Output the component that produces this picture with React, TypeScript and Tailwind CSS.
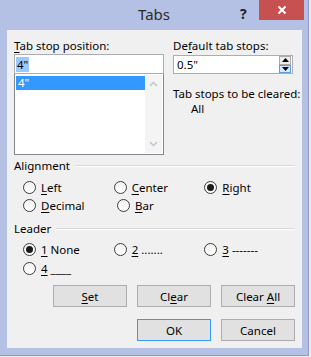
import React from 'react';

const U = ({ children }: { children: React.ReactNode }) => <span className="underline underline-offset-2">{children}</span>;

function Radio({ checked, children }: { checked?: boolean; children: React.ReactNode }) {
  return (
    <div className="w-[94px] flex items-center gap-[5px]">
      <span className="w-[13px] h-[13px] rounded-full border border-[#3c3c3c] bg-gradient-to-b from-[#f2f2f2] to-white flex items-center justify-center">
        {checked && <span className="w-[7px] h-[7px] rounded-full bg-[#1a1a1a]" />}
      </span>
      <span className="leading-[15px] whitespace-nowrap">{children}</span>
    </div>
  );
}

function GroupLabel({ children }: { children: React.ReactNode }) {
  return (
    <div className="flex items-center gap-[5px] h-[15px]">
      <span className="leading-[15px]">{children}</span>
      <span className="flex-1 h-px bg-[#d8d8d8] border-b border-white box-content" />
    </div>
  );
}

function Btn({ children, focused }: { children: React.ReactNode; focused?: boolean }) {
  return (
    <button
      type="button"
      className={`w-[74px] h-[22px] bg-[#e1e1e1] border leading-[15px] text-black ${focused ? 'border-[#3399ff]' : 'border-[#adadad]'}`}
    >
      {children}
    </button>
  );
}

export default function App() {
  return (
    <div className="w-[311px] h-[357px] bg-[#ececec] font-['Noto_Sans',sans-serif] text-[11.5px] text-black">
      <div className="w-[309px] h-[356px] bg-[#b4c0e4] border-r border-b border-[#8e99c6] relative">
        <div className="h-[30px] flex items-center justify-center text-[15px] text-[#2b2b2b] pb-[1px]">Tabs</div>
        <div className="absolute left-[240px] top-[3px] text-[14px] font-bold text-[#222]">?</div>
        <div className="absolute left-[259px] top-0 w-[45px] h-[20px] bg-[#c75050] flex items-center justify-center">
          <svg width="10" height="10" viewBox="0 0 10 10">
            <path d="M1.5 1.5 L8.5 8.5 M8.5 1.5 L1.5 8.5" stroke="white" strokeWidth="2" />
          </svg>
        </div>

        <div className="ml-[7px] w-[295px] h-[318px] bg-[#f0f0f0] px-[7px] pt-[8px]">
          <div className="flex gap-[9px]">
            <div className="w-[152px] flex flex-col">
              <div className="h-[15px] leading-[15px]"><U>T</U>ab stop position:</div>
              <div className="mt-[1px] h-[20px] bg-white border border-[#abadb3] flex items-center pl-[1px]">
                <span className="bg-[#99c9ff] px-[1px] leading-[15px]">4"</span>
              </div>
              <div className="h-[81px] bg-white border border-[#828790] border-t-0 flex p-[1px]">
                <div className="flex-1">
                  <div className="h-[14px] mt-[1px] bg-[#3399ff] text-white leading-[14px] pl-[2px]">4"</div>
                </div>
                <div className="w-[17px] bg-[#f4f4f4] flex flex-col justify-between items-center py-[6px]">
                  <svg width="9" height="6" viewBox="0 0 9 6"><path d="M1 5 L4.5 1.5 L8 5" stroke="#c4c4c4" strokeWidth="1.5" fill="none" /></svg>
                  <svg width="9" height="6" viewBox="0 0 9 6"><path d="M1 1 L4.5 4.5 L8 1" stroke="#c4c4c4" strokeWidth="1.5" fill="none" /></svg>
                </div>
              </div>
            </div>

            <div className="w-[122px] flex flex-col">
              <div className="h-[15px] leading-[15px] whitespace-nowrap">De<U>f</U>ault tab stops:</div>
              <div className="mt-[2px] w-[120px] h-[19px] bg-white border border-[#abadb3] flex items-center">
                <span className="flex-1 pl-[3px] leading-[15px]">0.5"</span>
                <div className="w-[12px] h-full flex flex-col mr-[1px]">
                  <div className="flex-1 border border-[#acacac] bg-[#ececec] flex items-center justify-center">
                    <svg width="7" height="4" viewBox="0 0 7 4"><path d="M0 4 L3.5 0 L7 4 Z" fill="#000" /></svg>
                  </div>
                  <div className="flex-1 border border-[#5b9be0] bg-[#d6e8f9] flex items-center justify-center">
                    <svg width="7" height="4" viewBox="0 0 7 4"><path d="M0 0 L3.5 4 L7 0 Z" fill="#000" /></svg>
                  </div>
                </div>
              </div>
              <div className="mt-[12px] h-[15px] leading-[15px] whitespace-nowrap">Tab stops to be cleared:</div>
              <div className="h-[15px] leading-[15px] pl-[18px]">All</div>
            </div>
          </div>

          <div className="mt-[3px]">
            <GroupLabel>Alignment</GroupLabel>
          </div>
          <div className="mt-[5px] pl-[9px]">
            <div className="flex h-[18px] items-center">
              <Radio><U>L</U>eft</Radio>
              <Radio><U>C</U>enter</Radio>
              <Radio checked><U>R</U>ight</Radio>
            </div>
            <div className="flex h-[18px] items-center">
              <Radio><U>D</U>ecimal</Radio>
              <Radio><U>B</U>ar</Radio>
            </div>
          </div>

          <div className="mt-[7px]">
            <GroupLabel>Leader</GroupLabel>
          </div>
          <div className="mt-[4px] pl-[9px]">
            <div className="flex h-[19px] items-center">
              <Radio checked><U>1</U> None</Radio>
              <Radio><U>2</U> .......</Radio>
              <Radio><U>3</U> -------</Radio>
            </div>
            <div className="flex h-[18px] items-center">
              <Radio><U>4</U> ____</Radio>
            </div>
          </div>

          <div className="mt-[8px] flex justify-end gap-[10px]">
            <Btn><U>S</U>et</Btn>
            <Btn>Cl<U>e</U>ar</Btn>
            <Btn>Clear <U>A</U>ll</Btn>
          </div>
          <div className="mt-[12px] flex justify-end gap-[10px]">
            <Btn focused>OK</Btn>
            <Btn>Cancel</Btn>
          </div>
        </div>
      </div>
    </div>
  );
}
